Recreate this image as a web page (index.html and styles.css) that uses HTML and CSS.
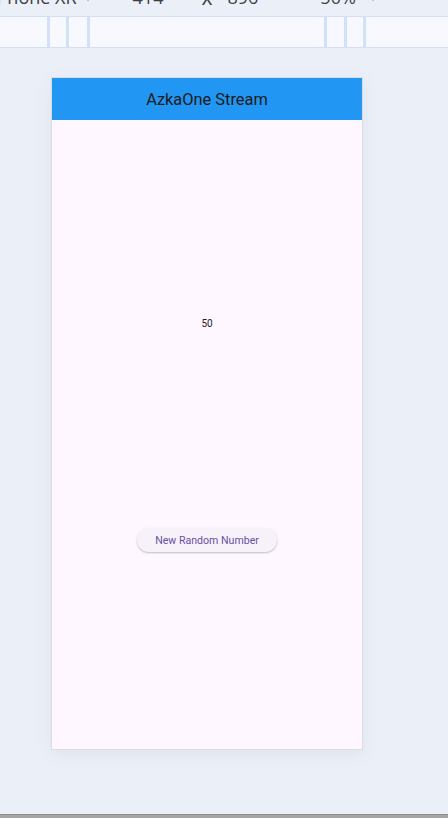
FILE: index.html
```html
<!DOCTYPE html>
<html lang="en">
<head>
<meta charset="utf-8">
<title>AzkaOne Stream</title>
<link rel="stylesheet" href="styles.css">
</head>
<body>
<div class="page">
  <div class="toolbar">
    <span class="tb-device">iPhone XR</span>
    <span class="tb-caret">▾</span>
    <span class="tb-w">414</span>
    <span class="tb-x">x</span>
    <span class="tb-h">896</span>
    <span class="tb-zoom">50%</span>
    <span class="tb-caret2">▾</span>
  </div>
  <div class="ruler">
    <span class="tick t1"></span>
    <span class="tick t2"></span>
    <span class="tick t3"></span>
    <span class="tick t4"></span>
    <span class="tick t5"></span>
    <span class="tick t6"></span>
  </div>
  <div class="stage">
    <div class="device">
      <header class="appbar">AzkaOne Stream</header>
      <main class="content">
        <div class="number">50</div>
        <button class="btn">New Random Number</button>
      </main>
    </div>
  </div>
  <div class="scrollbar"></div>
</div>
</body>
</html>
```

FILE: styles.css
```css
html, body {
  margin: 0;
  padding: 0;
}
body {
  background: #ebf0f8;
  font-family: Roboto, "Noto Sans", sans-serif;
  overflow: hidden;
}
.page {
  display: flex;
  flex-direction: column;
  height: 818px;
}
.toolbar {
  height: 16px;
  overflow: hidden;
  border-bottom: 1px solid #d3e0f3;
  display: flex;
  align-items: flex-end;
  font-family: "Open Sans", "Noto Sans", sans-serif;
  font-size: 18px;
  color: #3c4043;
  white-space: nowrap;
  background: #ebeff7;
}
.toolbar span {
  line-height: 18px;
  margin-bottom: 10px;
  display: block;
}
.tb-device { margin-left: -8px; }
.tb-caret { margin-left: 8px; font-size: 12px; }
.tb-w { margin-left: 42px; }
.tb-x { margin-left: 38px; font-size: 21px; }
.tb-h { margin-left: 15px; }
.tb-zoom { margin-left: 62px; }
.tb-caret2 { margin-left: 14px; font-size: 12px; }
.ruler {
  height: 30px;
  background: #f7f9fe;
  border-bottom: 1px solid #d3e0f3;
  display: flex;
}
.tick {
  width: 3px;
  height: 100%;
  background: #d0e1f8;
}
.t1 { margin-left: 47px; }
.t2 { margin-left: 16px; }
.t3 { margin-left: 18px; }
.t4 { margin-left: 234px; }
.t5 { margin-left: 17px; }
.t6 { margin-left: 16px; }
.stage {
  flex: 1;
  padding: 29px 0 0 51px;
}
.device {
  width: 310px;
  height: 671px;
  border: 1px solid #dcdde2;
  background: #fef7ff;
  box-shadow: 0 4px 16px rgba(60, 80, 120, 0.08);
  display: flex;
  flex-direction: column;
}
.appbar {
  height: 42px;
  background: #2196f3;
  color: #1d1b20;
  font-size: 16.4px;
  display: flex;
  align-items: center;
  justify-content: center;
}
.content {
  flex: 1;
  display: flex;
  flex-direction: column;
  align-items: center;
  justify-content: space-evenly;
}
.number {
  font-size: 10px;
  line-height: 12px;
  color: #1d1b20;
}
.btn {
  width: 140px;
  height: 24px;
  border: none;
  border-radius: 12px;
  background: #f7f2fa;
  color: #6750a4;
  font-family: Roboto, "Noto Sans", sans-serif;
  font-size: 10.6px;
  box-shadow: 0 1px 2px rgba(0, 0, 0, 0.25);
  margin-bottom: -1px;
}
.scrollbar {
  height: 3px;
  background: #a4a4a4;
  border-top: 1px solid #8e8e8e;
}
```
